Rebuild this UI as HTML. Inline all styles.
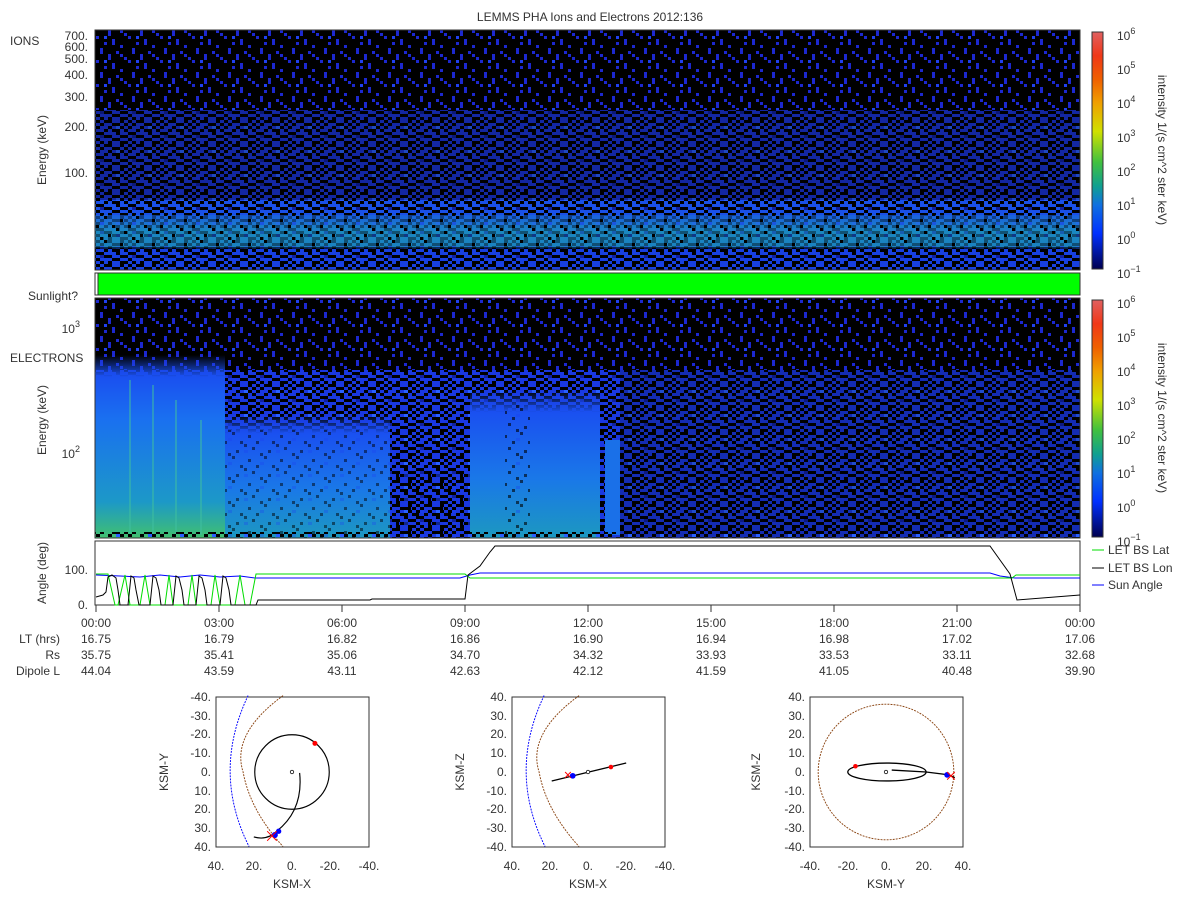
<!DOCTYPE html>
<html><head><meta charset="utf-8"><style>
html,body{margin:0;padding:0;background:#fff;}
svg{display:block;font-family:"Liberation Sans","DejaVu Sans",sans-serif;}
text{fill:#333;font-size:12px;}
</style></head><body>
<svg width="1200" height="900" viewBox="0 0 1200 900" xmlns="http://www.w3.org/2000/svg">
<defs>
<pattern id="nz" width="32" height="24" patternUnits="userSpaceOnUse">
<g fill="#000">
<rect x="0" y="0" width="4" height="3"/><rect x="8" y="0" width="8" height="3"/><rect x="24" y="0" width="4" height="3"/>
<rect x="4" y="3" width="4" height="3"/><rect x="16" y="3" width="8" height="3"/><rect x="28" y="3" width="4" height="3"/>
<rect x="0" y="6" width="4" height="3"/><rect x="12" y="6" width="4" height="3"/><rect x="24" y="6" width="4" height="3"/>
<rect x="8" y="9" width="4" height="3"/><rect x="16" y="9" width="8" height="3"/><rect x="28" y="9" width="4" height="3"/>
<rect x="0" y="12" width="8" height="3"/><rect x="20" y="12" width="4" height="3"/>
<rect x="8" y="15" width="8" height="3"/><rect x="24" y="15" width="8" height="3"/>
<rect x="0" y="18" width="4" height="3"/><rect x="16" y="18" width="8" height="3"/>
<rect x="4" y="21" width="4" height="3"/><rect x="12" y="21" width="4" height="3"/><rect x="24" y="21" width="8" height="3"/>
</g>
<rect x="20" y="6" width="4" height="3" fill="#2a60ff"/><rect x="4" y="15" width="4" height="3" fill="#1020a0"/>
</pattern>
<pattern id="ps" width="32" height="24" patternUnits="userSpaceOnUse">
<rect width="32" height="24" fill="#000"/>
<g fill="#1c28d0">
<rect x="4" y="0" width="3" height="6"/><rect x="20" y="3" width="3" height="3"/><rect x="12" y="6" width="3" height="6"/>
<rect x="28" y="9" width="3" height="3"/><rect x="0" y="12" width="3" height="3"/><rect x="16" y="15" width="3" height="6"/>
<rect x="8" y="18" width="3" height="3"/><rect x="24" y="21" width="3" height="3"/><rect x="24" y="6" width="3" height="3"/>
</g>
<rect x="8" y="12" width="3" height="3" fill="#2040f0"/>
</pattern>
<pattern id="pl" width="32" height="24" patternUnits="userSpaceOnUse">
<g fill="#000">
<rect x="8" y="0" width="3" height="3"/><rect x="24" y="3" width="3" height="3"/><rect x="0" y="9" width="3" height="3"/>
<rect x="16" y="9" width="3" height="3"/><rect x="28" y="15" width="3" height="3"/><rect x="12" y="18" width="3" height="3"/>
<rect x="4" y="21" width="3" height="3"/><rect x="20" y="12" width="3" height="3"/>
</g>
<rect x="4" y="6" width="4" height="3" fill="#1a40f0" opacity="0.6"/><rect x="20" y="18" width="4" height="3" fill="#1a40f0" opacity="0.6"/>
</pattern>
<linearGradient id="teal" x1="0" y1="0" x2="0" y2="1">
<stop offset="0" stop-color="#1a60e0"/><stop offset="0.5" stop-color="#1a88c0"/><stop offset="1" stop-color="#1a80c0"/>
</linearGradient>
<linearGradient id="eB1" x1="0" y1="0" x2="0" y2="1">
<stop offset="0" stop-color="#1a50f0" stop-opacity="0"/><stop offset="0.12" stop-color="#1a50f0"/><stop offset="0.35" stop-color="#1a70f0"/><stop offset="0.8" stop-color="#1c98c8"/><stop offset="1" stop-color="#40c070"/>
</linearGradient>
<linearGradient id="eB2" x1="0" y1="0" x2="0" y2="1">
<stop offset="0" stop-color="#1a50f0" stop-opacity="0"/><stop offset="0.15" stop-color="#1a50f0"/><stop offset="0.6" stop-color="#1a78e8"/><stop offset="1" stop-color="#1c98c0"/>
</linearGradient>
<linearGradient id="cb" x1="0" y1="0" x2="0" y2="1">
<stop offset="0" stop-color="#e06060"/><stop offset="0.1" stop-color="#f03818"/><stop offset="0.2" stop-color="#f06000"/>
<stop offset="0.3" stop-color="#f0a000"/><stop offset="0.42" stop-color="#d0e000"/><stop offset="0.55" stop-color="#40c040"/>
<stop offset="0.65" stop-color="#10a090"/><stop offset="0.73" stop-color="#1070e0"/><stop offset="0.85" stop-color="#0030ff"/><stop offset="1" stop-color="#000050"/>
</linearGradient>
</defs>

<text x="590" y="21" text-anchor="middle">LEMMS PHA Ions and Electrons  2012:136</text>

<!-- Ions panel -->
<rect x="95" y="30" width="985" height="80" fill="url(#ps)"/>
<rect x="95" y="110" width="985" height="90" fill="#1a34d8"/>
<rect x="95" y="110" width="985" height="90" fill="url(#nz)"/>
<rect x="95" y="110" width="985" height="90" fill="#000" opacity="0.25"/>
<rect x="95" y="200" width="985" height="15" fill="#1a50e8"/>
<rect x="95" y="200" width="985" height="15" fill="url(#nz)"/>
<rect x="95" y="215" width="985" height="33" fill="url(#teal)"/>
<rect x="95" y="215" width="985" height="33" fill="url(#pl)"/>
<rect x="95" y="215" width="985" height="33" fill="url(#nz)" opacity="0.4"/>
<rect x="95" y="248" width="985" height="22" fill="#1840e0"/>
<rect x="95" y="248" width="985" height="22" fill="url(#nz)"/>
<rect x="95" y="247" width="985" height="2" fill="#000" opacity="0.6"/>
<rect x="95" y="30" width="985" height="240" fill="none" stroke="#333"/>
<text x="10" y="45">IONS</text>
<g text-anchor="end" font-size="12">
<text x="88" y="40">700.</text><text x="88" y="51">600.</text><text x="88" y="63">500.</text><text x="88" y="79">400.</text><text x="88" y="101">300.</text><text x="88" y="131">200.</text><text x="88" y="177">100.</text>
</g>
<text transform="translate(46,150) rotate(-90)" text-anchor="middle">Energy (keV)</text>

<!-- Sunlight -->
<rect x="95" y="273" width="985" height="22" fill="#00ff00" stroke="#333"/>
<rect x="95" y="273" width="3" height="22" fill="#fff" stroke="#333"/>
<text x="28" y="300">Sunlight?</text>

<!-- Electrons -->
<rect x="95" y="298" width="985" height="72" fill="url(#ps)"/>
<rect x="95" y="370" width="985" height="168" fill="#1a38e0"/>
<rect x="95" y="370" width="985" height="168" fill="url(#nz)"/>
<rect x="620" y="370" width="460" height="168" fill="#000" opacity="0.2"/>
<rect x="95" y="355" width="130" height="183" fill="url(#eB1)"/>
<rect x="225" y="415" width="165" height="123" fill="url(#eB2)"/>
<rect x="225" y="430" width="165" height="108" fill="url(#pl)" opacity="0.5"/>
<rect x="390" y="470" width="80" height="68" fill="url(#pl)"/>
<rect x="470" y="390" width="130" height="148" fill="url(#eB2)"/>
<rect x="505" y="405" width="25" height="133" fill="url(#pl)" opacity="0.6"/>
<rect x="605" y="440" width="15" height="95" fill="#1a70e8"/>
<g fill="#40c0a0" opacity="0.5">
<rect x="129" y="380" width="2" height="155"/><rect x="152" y="385" width="2" height="150"/><rect x="175" y="400" width="2" height="135"/><rect x="200" y="420" width="2" height="115"/>
</g>
<rect x="95" y="532" width="985" height="5" fill="url(#nz)"/>
<rect x="95" y="298" width="985" height="240" fill="none" stroke="#333"/>
<text x="10" y="362">ELECTRONS</text>
<g text-anchor="end"><text x="80" y="333">10<tspan font-size="9" dy="-6">3</tspan></text><text x="80" y="458">10<tspan font-size="9" dy="-6">2</tspan></text></g>
<text transform="translate(46,420) rotate(-90)" text-anchor="middle">Energy (keV)</text>

<!-- Colorbars -->
<g>
<rect x="1092" y="32" width="11" height="237" fill="url(#cb)" stroke="#333"/>
<rect x="1092" y="300" width="11" height="237" fill="url(#cb)" stroke="#333"/>
<g font-size="12">
<text x="1117" y="40">10<tspan font-size="9" dy="-6">6</tspan></text><text x="1117" y="74">10<tspan font-size="9" dy="-6">5</tspan></text><text x="1117" y="108">10<tspan font-size="9" dy="-6">4</tspan></text><text x="1117" y="142">10<tspan font-size="9" dy="-6">3</tspan></text><text x="1117" y="176">10<tspan font-size="9" dy="-6">2</tspan></text><text x="1117" y="210">10<tspan font-size="9" dy="-6">1</tspan></text><text x="1117" y="244">10<tspan font-size="9" dy="-6">0</tspan></text><text x="1117" y="278">10<tspan font-size="9" dy="-6">−1</tspan></text>
<text x="1117" y="308">10<tspan font-size="9" dy="-6">6</tspan></text><text x="1117" y="342">10<tspan font-size="9" dy="-6">5</tspan></text><text x="1117" y="376">10<tspan font-size="9" dy="-6">4</tspan></text><text x="1117" y="410">10<tspan font-size="9" dy="-6">3</tspan></text><text x="1117" y="444">10<tspan font-size="9" dy="-6">2</tspan></text><text x="1117" y="478">10<tspan font-size="9" dy="-6">1</tspan></text><text x="1117" y="512">10<tspan font-size="9" dy="-6">0</tspan></text><text x="1117" y="546">10<tspan font-size="9" dy="-6">−1</tspan></text>
</g>
<text transform="translate(1158,150) rotate(90)" text-anchor="middle" font-size="11">intensity 1/(s cm^2 ster keV)</text>
<text transform="translate(1158,418) rotate(90)" text-anchor="middle" font-size="11">intensity 1/(s cm^2 ster keV)</text>
</g>

<!-- Angle panel -->
<rect x="95" y="541" width="985" height="64" fill="#fff" stroke="#333"/>
<g text-anchor="end"><text x="88" y="574">100.</text><text x="88" y="609">0.</text></g>
<text transform="translate(46,573) rotate(-90)" text-anchor="middle">Angle (deg)</text>
<polyline fill="none" stroke="#0000ff" stroke-width="1" points="96,575 120,576 140,577 160,575 180,577 200,575 220,577 240,576 255,578 460,578 470,575 480,573 990,573 1000,576 1015,578 1080,578"/>
<polyline fill="none" stroke="#00dd00" stroke-width="1" points="96,574 108,574 115,605 118,605 125,575 130,605 140,605 145,575 150,605 165,605 169,575 173,605 188,605 192,575 196,605 211,605 215,575 220,605 235,605 240,575 245,605 250,605 256,574 465,574 470,578 1012,578 1016,575 1080,575"/>
<polyline fill="none" stroke="#000" stroke-width="1" points="96,597 103,595 106,592 108,577 112,575 116,578 118,590 120,605 128,605 131,576 134,578 136,590 139,605 150,605 153,576 156,578 159,590 161,605 173,605 176,576 179,578 182,590 184,605 196,605 199,576 202,578 205,590 207,605 220,605 223,576 226,578 229,590 231,605 256,605 258,600 370,600 372,599 465,599 468,575 480,566 490,552 495,546 990,546 1000,560 1010,574 1017,600 1080,595"/>
<g stroke="#333">
<line x1="96" y1="605" x2="96" y2="612"/><line x1="219" y1="605" x2="219" y2="612"/><line x1="342" y1="605" x2="342" y2="612"/><line x1="465" y1="605" x2="465" y2="612"/><line x1="588" y1="605" x2="588" y2="612"/><line x1="711" y1="605" x2="711" y2="612"/><line x1="834" y1="605" x2="834" y2="612"/><line x1="957" y1="605" x2="957" y2="612"/><line x1="1080" y1="605" x2="1080" y2="612"/>
</g>
<line x1="1092" y1="550" x2="1104" y2="550" stroke="#00dd00"/><text x="1108" y="554" font-size="11">LET BS Lat</text>
<line x1="1092" y1="568" x2="1104" y2="568" stroke="#000"/><text x="1108" y="572" font-size="11">LET BS Lon</text>
<line x1="1092" y1="585" x2="1104" y2="585" stroke="#0000ff"/><text x="1108" y="589" font-size="11">Sun Angle</text>

<g text-anchor="middle">
<text x="96" y="627">00:00</text><text x="219" y="627">03:00</text><text x="342" y="627">06:00</text><text x="465" y="627">09:00</text><text x="588" y="627">12:00</text><text x="711" y="627">15:00</text><text x="834" y="627">18:00</text><text x="957" y="627">21:00</text><text x="1080" y="627">00:00</text>
<text x="96" y="643">16.75</text><text x="219" y="643">16.79</text><text x="342" y="643">16.82</text><text x="465" y="643">16.86</text><text x="588" y="643">16.90</text><text x="711" y="643">16.94</text><text x="834" y="643">16.98</text><text x="957" y="643">17.02</text><text x="1080" y="643">17.06</text>
<text x="96" y="659">35.75</text><text x="219" y="659">35.41</text><text x="342" y="659">35.06</text><text x="465" y="659">34.70</text><text x="588" y="659">34.32</text><text x="711" y="659">33.93</text><text x="834" y="659">33.53</text><text x="957" y="659">33.11</text><text x="1080" y="659">32.68</text>
<text x="96" y="675">44.04</text><text x="219" y="675">43.59</text><text x="342" y="675">43.11</text><text x="465" y="675">42.63</text><text x="588" y="675">42.12</text><text x="711" y="675">41.59</text><text x="834" y="675">41.05</text><text x="957" y="675">40.48</text><text x="1080" y="675">39.90</text>
</g>
<g text-anchor="end"><text x="60" y="643">LT (hrs)</text><text x="60" y="659">Rs</text><text x="60" y="675">Dipole L</text></g>

<!-- Orbit plot 1 -->
<g>
<rect x="216" y="697" width="153" height="150" fill="#fff" stroke="#333"/>
<g text-anchor="end" font-size="11"><text x="211" y="701">-40.</text><text x="211" y="720">-30.</text><text x="211" y="738">-20.</text><text x="211" y="757">-10.</text><text x="211" y="776">0.</text><text x="211" y="795">10.</text><text x="211" y="813">20.</text><text x="211" y="832">30.</text><text x="211" y="851">40.</text></g>
<g text-anchor="middle" font-size="11"><text x="216" y="870">40.</text><text x="254" y="870">20.</text><text x="292" y="870">0.</text><text x="330" y="870">-20.</text><text x="369" y="870">-40.</text></g>
<text x="292" y="888" text-anchor="middle">KSM-X</text>
<text transform="translate(168,772) rotate(-90)" text-anchor="middle">KSM-Y</text>
<g transform="translate(292,772) scale(1.91)">
<path d="M-4.7,-40 Q-32,-20 -25.6,0 Q-22,20 -4.7,39" fill="none" stroke="#8b4513" stroke-width="0.5" stroke-dasharray="1,0.6"/>
<path d="M-23,-40 Q-42,0 -22.5,39" fill="none" stroke="#0000ff" stroke-width="0.5" stroke-dasharray="1,0.6"/>
<circle cx="0" cy="0" r="19.5" fill="none" stroke="#000" stroke-width="0.6"/>
<path d="M4,0.5 Q6,20 -8,31 Q-13,36 -20,34" fill="none" stroke="#000" stroke-width="0.6"/>
<circle cx="0" cy="0" r="0.9" fill="none" stroke="#000" stroke-width="0.4"/>
<circle cx="12" cy="-15" r="1.3" fill="#f00"/>
<circle cx="-9" cy="33" r="1.6" fill="#00f"/><circle cx="-7" cy="31" r="1.4" fill="#00f"/>
<path d="M-13,31 l5,5 M-13,36 l5,-5" stroke="#f00" stroke-width="0.5"/>
</g>
</g>

<!-- Orbit plot 2 -->
<g>
<rect x="512" y="697" width="153" height="150" fill="#fff" stroke="#333"/>
<g text-anchor="end" font-size="11"><text x="507" y="701">40.</text><text x="507" y="720">30.</text><text x="507" y="738">20.</text><text x="507" y="757">10.</text><text x="507" y="776">0.</text><text x="507" y="795">-10.</text><text x="507" y="813">-20.</text><text x="507" y="832">-30.</text><text x="507" y="851">-40.</text></g>
<g text-anchor="middle" font-size="11"><text x="512" y="870">40.</text><text x="550" y="870">20.</text><text x="588" y="870">0.</text><text x="626" y="870">-20.</text><text x="665" y="870">-40.</text></g>
<text x="588" y="888" text-anchor="middle">KSM-X</text>
<text transform="translate(464,772) rotate(-90)" text-anchor="middle">KSM-Z</text>
<g transform="translate(588,772) scale(1.91)">
<path d="M-4.7,-40 Q-32,-20 -25.6,0 Q-22,20 -4.7,39" fill="none" stroke="#8b4513" stroke-width="0.5" stroke-dasharray="1,0.6"/>
<path d="M-23,-40 Q-42,0 -22.5,39" fill="none" stroke="#0000ff" stroke-width="0.5" stroke-dasharray="1,0.6"/>
<path d="M-19,4.7 L20,-4.7" stroke="#000" stroke-width="0.7"/>
<circle cx="0" cy="0" r="0.9" fill="#fff" stroke="#000" stroke-width="0.4"/>
<circle cx="12" cy="-2.6" r="1.2" fill="#f00"/>
<circle cx="-8" cy="2" r="1.5" fill="#00f"/>
<path d="M-12,0 l3,3 M-12,3 l3,-3" stroke="#f00" stroke-width="0.5"/>
</g>
</g>

<!-- Orbit plot 3 -->
<g>
<rect x="810" y="697" width="153" height="150" fill="#fff" stroke="#333"/>
<g text-anchor="end" font-size="11"><text x="805" y="701">40.</text><text x="805" y="720">30.</text><text x="805" y="738">20.</text><text x="805" y="757">10.</text><text x="805" y="776">0.</text><text x="805" y="795">-10.</text><text x="805" y="813">-20.</text><text x="805" y="832">-30.</text><text x="805" y="851">-40.</text></g>
<g text-anchor="middle" font-size="11"><text x="810" y="870">-40.</text><text x="848" y="870">-20.</text><text x="886" y="870">0.</text><text x="924" y="870">20.</text><text x="963" y="870">40.</text></g>
<text x="886" y="888" text-anchor="middle">KSM-Y</text>
<text transform="translate(760,772) rotate(-90)" text-anchor="middle">KSM-Z</text>
<g transform="translate(886,772) scale(1.91)">
<circle cx="0" cy="0" r="35.5" fill="none" stroke="#8b4513" stroke-width="0.5" stroke-dasharray="1,0.6"/>
<ellipse cx="0.5" cy="0" rx="20.5" ry="4.7" fill="none" stroke="#000" stroke-width="0.7"/>
<path d="M3,-1 L21,0 L33,1.5 L36,3" fill="none" stroke="#000" stroke-width="0.7"/>
<circle cx="0" cy="0" r="0.9" fill="#fff" stroke="#000" stroke-width="0.4"/>
<circle cx="-16" cy="-3" r="1.2" fill="#f00"/>
<circle cx="32" cy="1.5" r="1.5" fill="#00f"/>
<path d="M32,0 l4,4 M32,4 l4,-4" stroke="#f00" stroke-width="0.5"/>
</g>
</g>
</svg>
</body></html>
